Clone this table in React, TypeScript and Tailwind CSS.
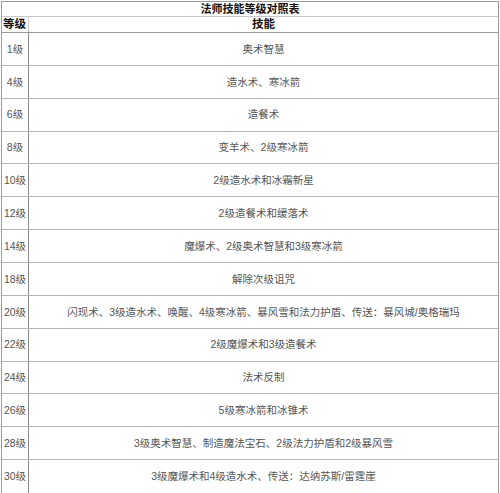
const rows: [string, string][] = [
  ["1级", "奥术智慧"],
  ["4级", "造水术、寒冰箭"],
  ["6级", "造餐术"],
  ["8级", "变羊术、2级寒冰箭"],
  ["10级", "2级造水术和冰霜新星"],
  ["12级", "2级造餐术和缓落术"],
  ["14级", "魔爆术、2级奥术智慧和3级寒冰箭"],
  ["18级", "解除次级诅咒"],
  ["20级", "闪现术、3级造水术、唤醒、4级寒冰箭、暴风雪和法力护盾、传送：暴风城/奥格瑞玛"],
  ["22级", "2级魔爆术和3级造餐术"],
  ["24级", "法术反制"],
  ["26级", "5级寒冰箭和冰锥术"],
  ["28级", "3级奥术智慧、制造魔法宝石、2级法力护盾和2级暴风雪"],
  ["30级", "3级魔爆术和4级造水术、传送：达纳苏斯/雷霆崖"],
];

export default function App() {
  return (
    <div className="min-h-[493px] bg-white pt-px pl-px font-['Liberation_Sans','Noto_Sans_CJK_SC',sans-serif]">
      <div className="w-[498px] border border-[#9a9a9a]">
        <div className="flex h-[15px] items-center justify-center border-b border-[#c8c8c8] text-[11px] font-bold leading-none text-[#111]">
          法师技能等级对照表
        </div>
        <div className="flex h-[16px] border-b border-[#9a9a9a] text-[11.5px] font-bold leading-none text-[#111]">
          <div className="flex w-[27px] shrink-0 items-center border-r border-[#c8c8c8] pl-[1px]">等级</div>
          <div className="flex flex-1 items-center justify-center">技能</div>
        </div>
        {rows.map(([level, skill], i) => (
          <div
            key={level}
            className={`flex h-[32.86px] text-[10.5px] leading-none text-[#555] ${
              i < rows.length - 1 ? "border-b border-[#b4b4b4]" : ""
            }`}
          >
            <div className="flex w-[27px] shrink-0 items-center justify-center border-r border-[#8a8a8a]">{level}</div>
            <div className="flex flex-1 items-center justify-center whitespace-nowrap">{skill}</div>
          </div>
        ))}
      </div>
    </div>
  );
}
